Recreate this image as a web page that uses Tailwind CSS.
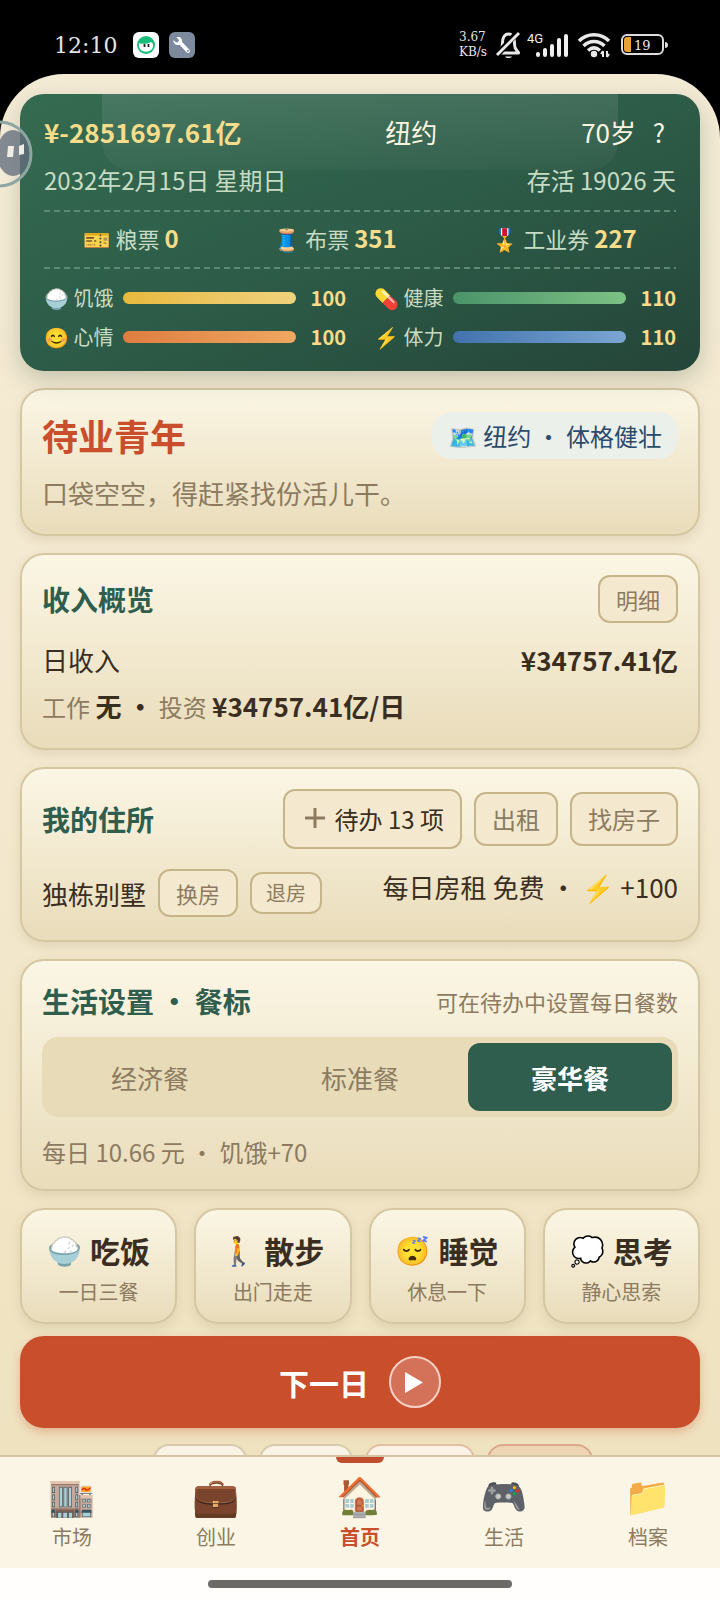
<!DOCTYPE html>
<html lang="zh-CN">
  <head>
    <meta charset="UTF-8" />
    <meta name="viewport" content="width=device-width, initial-scale=1.0" />
    <title>首页</title>
    <!-- Tailwind CSS CDN -->
    <script src="https://cdn.jsdelivr.net/npm/@tailwindcss/browser@4"></script>
  </head>
  <body class="bg-black font-['Noto_Sans_CJK_SC','Noto_Color_Emoji',sans-serif] text-[#3a2e22]">
    <div class="relative flex h-screen flex-col overflow-hidden">
      <!-- Status bar -->
      <header class="flex h-[74px] shrink-0 items-center justify-between pt-4 pr-[52px] pl-[54px] font-['DejaVu_Serif',serif] text-[#e4e4e4]">
        <div class="flex items-center gap-[10px]">
          <span class="mr-[6px] text-[22px]">12:10</span>
          <svg class="size-[26px]" viewBox="0 0 26 26">
            <rect width="26" height="26" rx="6" fill="#fff" />
            <circle cx="13" cy="13" r="9" fill="#17bd78" />
            <path d="M6 11c3 1.500 9 1 12-1 2 1 3 4 1 7-3 3.500-9 3.500-12 0-1-2-1.500-4-1-6z" fill="#fff" />
            <path d="M11.500 12v3M15.500 12v3" stroke="#222" stroke-width="1.800" />
          </svg>
          <svg class="size-[26px]" viewBox="0 0 26 26">
            <rect width="26" height="26" rx="6" fill="#7d899c" />
            <path d="M11 10.500l8 8.500" stroke="#fff" stroke-width="4" stroke-linecap="round" />
            <path d="M7.500 5.500l2.500 2.500-.5 2-2.500.5-2.500-2.500c-.5 3 2 5.500 5.500 5l3-3c.5-3.500-2-6-5.500-4.500z" fill="#fff" />
            <circle cx="19" cy="19" r="1" fill="#7d899c" />
          </svg>
        </div>
        <div class="flex items-center">
          <div class="mr-2 text-[12px] leading-[15px]">3.67<br />KB/s</div>
          <svg class="mr-[5px] h-[28px] w-[27px]" viewBox="0 0 27 28" fill="none" stroke="#e8e8e8" stroke-width="3">
            <path d="M5 20c2-2 2.500-4 2.500-8 0-5 2-9 6-9s6 4 6 9 1 6 4 9.500v.5H3z" stroke-linejoin="round" />
            <path d="M22 2L2 24" stroke="#000" stroke-width="6" />
            <path d="M24 2L2 24" />
            <path d="M10 25.500h7c-1 2-6 2-7 0z" fill="#e8e8e8" stroke="none" />
          </svg>
          <svg class="mr-[8px] h-[28px] w-[42px]" viewBox="0 0 42 28" stroke="#efefef" stroke-width="4" stroke-linecap="round">
            <text x="0" y="12" fill="#efefef" stroke="none" font-size="13" font-family="Roboto, sans-serif">4G</text>
            <path d="M11 24v-1M18 24v-5M25 24v-9M32 24V9M39 24V5" />
          </svg>
          <svg class="mr-[10px] h-[28px] w-[34px]" viewBox="0 0 34 28" fill="none" stroke="#e8e8e8" stroke-width="3.500">
            <path d="M2 10c8-8.500 22-8.500 30 0M6.500 15c6-6 15-6 21 0M11 19.500c4-3.500 8-3.500 12 0" />
            <circle cx="17" cy="23" r="3.200" fill="#e8e8e8" stroke="none" />
            <path d="M26 20v6M30 20v6M24 23l2-3M32 23l-2 3" stroke-width="2" />
          </svg>
          <svg class="h-[24px] w-[47px]" viewBox="0 0 47 24">
            <rect x="1" y="2" width="41" height="19" rx="5" fill="none" stroke="#ddd" stroke-width="2" />
            <path d="M44 9q3 0 3 3t-3 3z" fill="#ddd" />
            <path d="M6 4h4v15H6q-3 0-3-3V7q0-3 3-3z" fill="#eba133" />
            <text x="13" y="17" fill="#e8e8e8" font-size="13" font-family="DejaVu Serif, serif">19</text>
          </svg>
        </div>
      </header>

      <main class="min-h-0 flex-1 overflow-hidden rounded-t-[64px] bg-linear-to-b from-[#f5ecd6] via-[#f4e9cf] to-[#efe2bf] px-5 pt-5">
        <div class="flex flex-col gap-[17px]">
          <!-- Player summary -->
          <section class="relative rounded-3xl bg-linear-to-br from-[#356b51] via-[#2d5c48] to-[#244539] px-6 pt-5 pb-[19px] text-[#c8dcc4] shadow-[0_8px_24px_rgba(50,70,50,0.25)]">
            <div class="absolute top-0 right-[12%] left-[12%] h-[76px] rounded-b-[28px] bg-linear-to-b from-white/10 to-white/3"></div>
            <div class="relative flex h-[34px] items-center justify-between text-[26px] text-[#fbf5e0]">
              <strong class="font-bold text-[#f7dc8a]">¥-2851697.61亿</strong>
              <span>纽约</span>
              <div class="flex items-center gap-[6px]">
                <span>70岁</span>
                <button type="button" aria-label="帮助" class="w-[34px] text-center">?</button>
              </div>
            </div>
            <div class="relative mt-[14px] flex h-9 items-center justify-between text-2xl">
              <span>2032年2月15日 星期日</span>
              <span>存活 19026 天</span>
            </div>
            <svg class="mt-3 block h-[2px] w-full" stroke="#5c8a74" stroke-width="2" stroke-dasharray="6 4"><path d="M0 1H2000" /></svg>
            <div class="flex h-[55px] items-center justify-around gap-4 pb-[2px] text-[22px]">
              <span>🎫 粮票 <b class="text-2xl text-[#f7dc8a]">0</b></span>
              <span>🧵 布票 <b class="text-2xl text-[#f7dc8a]">351</b></span>
              <span>🎖️ 工业券 <b class="text-2xl text-[#f7dc8a]">227</b></span>
            </div>
            <svg class="block h-[2px] w-full" stroke="#5c8a74" stroke-width="2" stroke-dasharray="6 4"><path d="M0 1H2000" /></svg>
            <div class="mt-[14px] grid grid-cols-2 gap-x-7 gap-y-[9px] text-xl leading-[30px]">
              <div class="flex items-center gap-[10px]">
                <span>🍚 饥饿</span>
                <div class="h-3 flex-1 rounded-full bg-linear-to-r from-[#e8b93c] to-[#f0d27c]"></div>
                <b class="w-10 text-right text-[#f7dc8a]">100</b>
              </div>
              <div class="flex items-center gap-[10px]">
                <span>💊 健康</span>
                <div class="h-3 flex-1 rounded-full bg-linear-to-r from-[#4b946b] to-[#7cc184]"></div>
                <b class="w-10 text-right text-[#f7dc8a]">110</b>
              </div>
              <div class="flex items-center gap-[10px]">
                <span>😊 心情</span>
                <div class="h-3 flex-1 rounded-full bg-linear-to-r from-[#de7d40] to-[#f0a861]"></div>
                <b class="w-10 text-right text-[#f7dc8a]">100</b>
              </div>
              <div class="flex items-center gap-[10px]">
                <span>⚡ 体力</span>
                <div class="h-3 flex-1 rounded-full bg-linear-to-r from-[#4272ad] to-[#7ba6d3]"></div>
                <b class="w-10 text-right text-[#f7dc8a]">110</b>
              </div>
            </div>
          </section>

          <!-- Job -->
          <section class="rounded-3xl border-2 border-[#d5c7a2] bg-linear-to-b from-[#fbf6e5] to-[#e9dcba] p-5 shadow-[0_4px_12px_rgba(90,70,30,0.12)]">
            <div class="flex h-[50px] items-center justify-between">
              <h1 class="text-4xl font-bold text-[#c84e2c]">待业青年</h1>
              <span class="rounded-[20px] bg-[#ecf0ea] px-4 text-2xl leading-[47px] text-[#2c4a6b]">🗺️ 纽约 · 体格健壮</span>
            </div>
            <p class="mt-[14px] pb-[2px] text-[26px] leading-[38px] text-[#8c7b60]">口袋空空，得赶紧找份活儿干。</p>
          </section>

          <!-- Income -->
          <section class="rounded-3xl border-2 border-[#d5c7a2] bg-linear-to-b from-[#fbf6e5] to-[#e9dcba] p-5 shadow-[0_4px_12px_rgba(90,70,30,0.12)]">
            <div class="flex h-12 items-center justify-between">
              <h2 class="text-[28px] font-bold text-[#2f5d4e]">收入概览</h2>
              <button type="button" class="h-12 rounded-xl border-2 border-[#c6b589] bg-[#f4e9cf] px-4 text-[22px] text-[#8c7b60]">明细</button>
            </div>
            <div class="mt-[18px] flex justify-between text-[26px] leading-[38px]">
              <span>日收入</span>
              <b>¥34757.41亿</b>
            </div>
            <p class="mt-2 pb-[2px] text-2xl leading-[38px] text-[#8c7b60]">工作 <b class="text-[26px] text-[#3a2e22]">无 ·</b> 投资 <b class="text-[26px] text-[#3a2e22]">¥34757.41亿/日</b></p>
          </section>

          <!-- Home -->
          <section class="rounded-3xl border-2 border-[#d5c7a2] bg-linear-to-b from-[#fbf6e5] to-[#e9dcba] p-5 shadow-[0_4px_12px_rgba(90,70,30,0.12)]">
            <div class="flex items-center justify-between">
              <h2 class="text-[28px] font-bold text-[#2f5d4e]">我的住所</h2>
              <div class="flex items-center gap-3 text-2xl text-[#8c7b60]">
                <button type="button" class="flex h-[60px] items-center gap-[6px] rounded-xl border-2 border-[#c6b589] bg-[#f4e9cf] px-4 text-[#3a2e22]">
                  <svg class="size-7" viewBox="0 0 28 28" stroke="#8c7b60" stroke-width="3"><path d="M4 13h20M14 3v20" /></svg>
                  待办 13 项
                </button>
                <button type="button" class="h-[54px] rounded-xl border-2 border-[#c6b589] bg-[#f4e9cf] px-4">出租</button>
                <button type="button" class="h-[54px] rounded-xl border-2 border-[#c6b589] bg-[#f4e9cf] px-4">找房子</button>
              </div>
            </div>
            <div class="mt-5 flex min-h-[51px] items-start justify-between text-[26px]">
              <div class="flex items-center gap-3">
                <span>独栋别墅</span>
                <button type="button" class="h-12 rounded-xl border-2 border-[#c6b589] bg-[#f4e9cf] px-4 text-[22px] text-[#8c7b60]">换房</button>
                <button type="button" class="h-[42px] rounded-xl border-2 border-[#c6b589] bg-[#f4e9cf] px-[14px] text-xl text-[#8c7b60]">退房</button>
              </div>
              <span class="leading-9">每日房租 免费 · ⚡ +100</span>
            </div>
          </section>

          <!-- Meals -->
          <section class="rounded-3xl border-2 border-[#d5c7a2] bg-linear-to-b from-[#fbf6e5] to-[#e9dcba] p-5 shadow-[0_4px_12px_rgba(90,70,30,0.12)]">
            <div class="flex h-10 items-center justify-between">
              <h2 class="text-[28px] font-bold text-[#2f5d4e]">生活设置 · 餐标</h2>
              <span class="text-[22px] text-[#8c7b60]">可在待办中设置每日餐数</span>
            </div>
            <div class="mt-4 grid grid-cols-3 gap-[6px] rounded-2xl bg-[#e8dcb8] p-[6px] text-[26px] text-[#8c7b60]">
              <button type="button" class="h-[68px] rounded-xl">经济餐</button>
              <button type="button" class="h-[68px] rounded-xl">标准餐</button>
              <button type="button" class="h-[68px] rounded-xl bg-[#2f5d4e] font-bold text-white">豪华餐</button>
            </div>
            <p class="mt-[18px] text-2xl leading-[34px] text-[#8c7b60]">每日 10.66 元 · 饥饿+70</p>
          </section>

          <!-- Actions -->
          <div class="grid grid-cols-4 gap-[17px]">
            <button type="button" class="rounded-3xl border-2 border-[#d5c7a2] bg-linear-to-b from-[#fbf6e5] to-[#e9dcba] pt-[18px] pb-4 shadow-[0_4px_12px_rgba(90,70,30,0.12)]">
              <span class="flex h-11 items-center justify-center gap-2 text-3xl font-bold"><span class="text-[28px]">🍚</span>吃饭</span>
              <span class="mt-[6px] block text-xl leading-7 text-[#8c7b60]">一日三餐</span>
            </button>
            <button type="button" class="rounded-3xl border-2 border-[#d5c7a2] bg-linear-to-b from-[#fbf6e5] to-[#e9dcba] pt-[18px] pb-4 shadow-[0_4px_12px_rgba(90,70,30,0.12)]">
              <span class="flex h-11 items-center justify-center gap-2 text-3xl font-bold"><span class="text-[28px]">🚶</span>散步</span>
              <span class="mt-[6px] block text-xl leading-7 text-[#8c7b60]">出门走走</span>
            </button>
            <button type="button" class="rounded-3xl border-2 border-[#d5c7a2] bg-linear-to-b from-[#fbf6e5] to-[#e9dcba] pt-[18px] pb-4 shadow-[0_4px_12px_rgba(90,70,30,0.12)]">
              <span class="flex h-11 items-center justify-center gap-2 text-3xl font-bold"><span class="text-[28px]">😴</span>睡觉</span>
              <span class="mt-[6px] block text-xl leading-7 text-[#8c7b60]">休息一下</span>
            </button>
            <button type="button" class="rounded-3xl border-2 border-[#d5c7a2] bg-linear-to-b from-[#fbf6e5] to-[#e9dcba] pt-[18px] pb-4 shadow-[0_4px_12px_rgba(90,70,30,0.12)]">
              <span class="flex h-11 items-center justify-center gap-2 text-3xl font-bold"><span class="text-[28px]">💭</span>思考</span>
              <span class="mt-[6px] block text-xl leading-7 text-[#8c7b60]">静心思索</span>
            </button>
          </div>
        </div>

        <button type="button" class="mt-3 flex h-[92px] w-full items-center justify-center gap-5 rounded-3xl bg-[#c84e2c] text-3xl font-bold text-white shadow-[0_4px_10px_rgba(200,78,44,0.3)]">
          下一日
          <svg class="size-[52px]" viewBox="0 0 52 52">
            <circle cx="26" cy="26" r="25" fill="#d37259" stroke="#f8d0c4" stroke-width="2" />
            <path d="M16 16v21l18-10.500z" fill="#fff" />
          </svg>
        </button>

        <div class="mt-4 flex justify-center gap-3 pl-[26px]">
          <div class="h-12 w-[94px] rounded-2xl border-2 border-[#d6cbae] bg-[#f9f3e6]"></div>
          <div class="h-12 w-[94px] rounded-2xl border-2 border-[#d6cbae] bg-[#f9f3e6]"></div>
          <div class="h-12 w-[110px] rounded-2xl border-2 border-[#e2bea2] bg-[#f9f2e5]"></div>
          <div class="h-12 w-[106px] rounded-2xl border-2 border-[#dda78a] bg-[#edd4b3]"></div>
        </div>
      </main>

      <!-- Tabs -->
      <nav class="grid h-[113px] shrink-0 grid-cols-5 border-t-2 border-[#d2c5a4] bg-[#fbf5e6] text-center text-xl text-[#8c7b60]">
        <a href="#market" class="flex flex-col items-center gap-1 pt-3"><span class="text-[38px] leading-[50px]">🏬</span><span class="leading-7">市场</span></a>
        <a href="#business" class="flex flex-col items-center gap-1 pt-3"><span class="text-[38px] leading-[50px]">💼</span><span class="leading-7">创业</span></a>
        <a href="#home" aria-current="page" class="relative flex flex-col items-center gap-1 pt-3 font-bold text-[#c84e2c]">
          <span class="absolute top-0 h-[6px] w-12 rounded-b-md bg-[#c14d2e]"></span>
          <span class="text-[38px] leading-[50px]">🏠</span><span class="leading-7">首页</span>
        </a>
        <a href="#life" class="flex flex-col items-center gap-1 pt-3"><span class="text-[38px] leading-[50px]">🎮</span><span class="leading-7">生活</span></a>
        <a href="#archive" class="flex flex-col items-center gap-1 pt-3"><span class="text-[38px] leading-[50px]">📁</span><span class="leading-7">档案</span></a>
      </nav>
      <div class="flex h-8 shrink-0 justify-center bg-[#fffefc] pt-3">
        <div class="h-2 w-[304px] rounded-full bg-[#6b6a67]"></div>
      </div>

      <!-- Floating assist button -->
      <button type="button" aria-label="悬浮球" class="absolute top-[120px] left-0 h-[68px] w-[33px]">
        <svg class="h-[68px] w-[33px]" viewBox="0 0 33 68">
          <circle cx="-1" cy="34" r="32" fill="#fff" fill-opacity=".12" stroke="#8fa5a3" stroke-width="3" />
          <ellipse cx="13" cy="33" rx="16" ry="23" fill="#5d6878" fill-opacity=".75" />
          <path d="M8 26h6l-1 11H7zM19 26l5-2v10l-5 1z" fill="#efeee6" />
        </svg>
      </button>
    </div>
  </body>
</html>
